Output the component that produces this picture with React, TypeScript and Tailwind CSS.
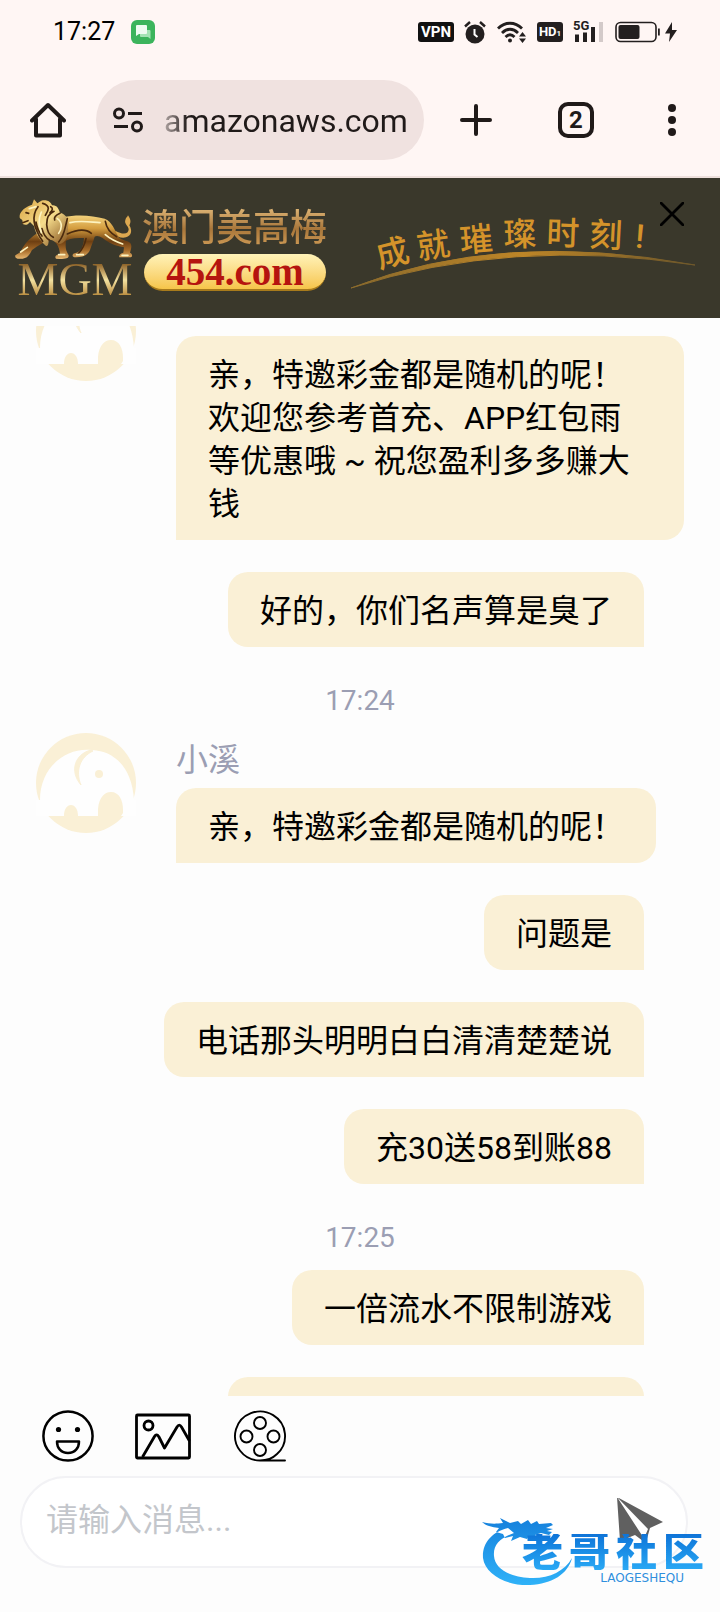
import { useState } from "react";
import type { ReactNode } from "react";

type Message =
  | { kind: "agent"; name?: string; text: string }
  | { kind: "user"; text: string }
  | { kind: "time"; text: string };

const messages: Message[] = [
  {
    kind: "agent",
    text: "亲，特邀彩金都是随机的呢！欢迎您参考首充、APP红包雨等优惠哦 ~ 祝您盈利多多赚大钱",
  },
  { kind: "user", text: "好的，你们名声算是臭了" },
  { kind: "time", text: "17:24" },
  { kind: "agent", name: "小溪", text: "亲，特邀彩金都是随机的呢！" },
  { kind: "user", text: "问题是" },
  { kind: "user", text: "电话那头明明白白清清楚楚说" },
  { kind: "user", text: "充30送58到账88" },
  { kind: "time", text: "17:25" },
  { kind: "user", text: "一倍流水不限制游戏" },
];

const slogan = [
  { char: "成", x: 392, y: 252, rotate: -14 },
  { char: "就", x: 433, y: 244, rotate: -8 },
  { char: "璀", x: 476, y: 238, rotate: -5 },
  { char: "璨", x: 520, y: 233, rotate: -2 },
  { char: "时", x: 563, y: 232, rotate: 2 },
  { char: "刻", x: 606, y: 234, rotate: 3 },
  { char: "!", x: 640, y: 235, rotate: 5 },
];

function StatusBar() {
  return (
    <div className="flex h-16 items-center justify-between pr-[41px] pl-[53px]">
      <div className="flex items-center gap-4">
        <span className="text-[25px] leading-8 text-black">17:27</span>
        <svg viewBox="0 0 24 24" className="size-6">
          <rect width="24" height="24" rx="6" fill="#3cb45c" />
          <path d="M9 10h9.500a1 1 0 0 1 1 1v8l-2.500-2H10a1 1 0 0 1-1-1z" fill="#a4e3b4" />
          <path d="M6 5h9a1 1 0 0 1 1 1v7a1 1 0 0 1-1 1H8l-3 2V6a1 1 0 0 1 1-1z" fill="#effbf1" />
        </svg>
      </div>
      <div className="flex items-center gap-[10px] text-[#231f1f]">
        <span className="flex h-5 w-9 items-center justify-center rounded-[3px] bg-[#111] text-[15px] font-bold text-white">
          VPN
        </span>
        <svg viewBox="0 0 22 24" className="h-6 w-[22px]" fill="currentColor">
          <circle cx="11" cy="14" r="9.500" />
          <path d="M1 6.500 6 2M21 6.500 16 2" stroke="currentColor" strokeWidth="2.400" />
          <path d="M10.500 9v5.500l3 2.500" stroke="#fff" strokeWidth="2" fill="none" />
        </svg>
        <svg viewBox="0 0 31 24" className="h-6 w-[31px]" fill="none" stroke="currentColor" strokeWidth="2.800">
          <path d="M2 8.500c7-7 17-7 24 0M6 13c5-5 11-5 16 0M9.500 17c3-3 6-3 9 0" />
          <circle cx="14" cy="20.500" r="2" fill="currentColor" stroke="none" />
          <path d="m26.500 12 3.500 4.500h-7zM26.500 23l3.500-4.500h-7z" fill="currentColor" stroke="none" />
        </svg>
        <span className="flex h-5 w-[26px] items-center justify-center rounded-[3px] bg-[#231f1f] text-[13px] font-bold text-white">
          HD<span className="mt-1 text-[8px]">1</span>
        </span>
        <svg viewBox="0 -4 32 32" className="size-8" fill="currentColor">
          <text x="0" y="10" fontSize="13" fontWeight="700">5G</text>
          <path d="M2 14.500h4V22H2zM10 12.500h4V22h-4zM18 7h4v15h-4z" />
          <path d="M26 2h4v20h-4z" opacity=".2" />
        </svg>
        <svg viewBox="0 0 64 24" className="h-6 w-16">
          <rect x="1" y="2.500" width="40" height="19" rx="4.500" fill="none" stroke="currentColor" strokeWidth="1.600" />
          <rect x="3.500" y="5" width="21" height="14" rx="2" fill="currentColor" />
          <path d="M43 8.500h1.800v7H43z" fill="currentColor" />
          <path d="M57 2 50 13.500h5L54 22l8-12h-5z" fill="currentColor" />
        </svg>
      </div>
    </div>
  );
}

function BarButton({ label, className = "", children }: { label: string; className?: string; children: ReactNode }) {
  return (
    <button type="button" aria-label={label} className={`flex size-12 shrink-0 items-center justify-center ${className}`}>
      {children}
    </button>
  );
}

function BrowserBar() {
  return (
    <div className="flex h-28 items-center px-6 text-[#201a19]">
      <BarButton label="Home">
        <svg viewBox="0 0 36 36" className="size-9" fill="none" stroke="currentColor" strokeWidth="4" strokeLinecap="round" strokeLinejoin="round">
          <path d="M2 18.500 18 3l16 15.500M6 17v16.500h24V17" />
        </svg>
      </BarButton>
      <div className="ml-6 flex h-20 min-w-0 flex-1 items-center rounded-full bg-[#f0e2e0] pr-4 pl-4">
        <svg viewBox="0 0 32 28" className="h-7 w-8 shrink-0" fill="none" stroke="currentColor" strokeWidth="3">
          <circle cx="7" cy="7.500" r="4.500" />
          <path d="M16 7.500h14M2 20.500h14" />
          <circle cx="25" cy="20.500" r="4.500" />
        </svg>
        <input
          aria-label="Address"
          readOnly
          value="amazonaws.com"
          className="ml-5 w-full min-w-0 bg-linear-to-r from-[#201a19]/30 to-[#201a19] to-[24px] bg-clip-text pt-[2px] text-[32px] leading-10 text-transparent outline-none"
        />
      </div>
      <BarButton label="New tab" className="ml-7">
        <svg viewBox="0 0 32 32" className="size-8" stroke="currentColor" strokeWidth="4" strokeLinecap="round">
          <path d="M16 2v28M2 16h28" />
        </svg>
      </BarButton>
      <BarButton label="Tabs" className="ml-[52px]">
        <span className="flex size-9 items-center justify-center rounded-[10px] border-4 border-current text-2xl font-bold">
          2
        </span>
      </BarButton>
      <BarButton label="More" className="ml-12">
        <svg viewBox="0 0 8 32" className="h-8 w-2" fill="currentColor">
          <circle cx="4" cy="4" r="4" />
          <circle cx="4" cy="16" r="4" />
          <circle cx="4" cy="28" r="4" />
        </svg>
      </BarButton>
    </div>
  );
}

function Lion() {
  return (
    <svg viewBox="0 0 390 216" className="h-[72px] w-[130px]">
      <defs>
        <linearGradient id="fur" x1="0" y1="0" x2="0" y2="1">
          <stop offset="0" stopColor="#f3d27c" />
          <stop offset=".3" stopColor="#d39c3e" />
          <stop offset=".6" stopColor="#6e3f12" />
          <stop offset=".8" stopColor="#a56a28" />
          <stop offset="1" stopColor="#e8b870" />
        </linearGradient>
        <linearGradient id="mane" x1="0" y1="0" x2="1" y2="1">
          <stop offset="0" stopColor="#d9a544" />
          <stop offset=".5" stopColor="#f6dc8c" />
          <stop offset="1" stopColor="#7d4a16" />
        </linearGradient>
      </defs>
      <path
        d="M316 116c20 12 40 12 40-4 0-10-14-16-10-28 2-8 6-8 8-14 8 12 10 20 4 30 10 16 6 32-10 36-14 3-26-2-34-8z"
        fill="#dca850"
      />
      <path
        d="M158 76c50-10 90-4 126 4 22 8 30 34 42 56 10 10 26 10 34 16 8 8 2 22 0 30 8 4 8 12 2 14h-34c-2-8 4-12 12-14l2-16c-24-4-44-12-64-28-10-6-18-8-24-4-4 14-10 26-14 40-6 14-20 22-42 22-14 0-12-10-4-12 22-6 26-22 28-46-20 0-38 0-54 8-2 18-2 28 8 44 0 10-6 12-38 10-6-8 2-12 12-14-2-24-12-34-24-44-20 8-40 16-60 32-8 16-14 24-28 26-20 2-24-4-22-10l16-10c10-24 26-40 46-54z"
        fill="url(#fur)"
      />
      <path
        d="M30 66c8-16 20-22 36-28l6-16 10 12 12-8c18-4 28 4 32 14 14-2 20 10 24 22 20 4 28 24 24 44 2 28-6 46-24 50-16-4-24-16-34-12 0 10-2 20-8 18-18-16-30-34-36-60l-12-12c-8 10-14 10-22 6 0-8 0-12-4-14-6-2-6-8-4-16z"
        fill="url(#mane)"
      />
      <g fill="none" stroke="#4a2a0e" strokeWidth="5" strokeLinecap="round">
        <path d="M84 44c-18 24-16 60 14 104M98 34c28 8 14 26 8 36M132 58c-22 12-20 20-22 40 2 20 6 30 20 38M78 90c4 24 12 34 18 42M38 92l16-6M48 62l8 2M172 80c-8 30-8 50-26 70M244 124c-20-16-46-10-72 2M286 88c4 24 16 36 34 46M228 140c-4 20-14 36-24 46M96 110c4 16 12 28 22 34M122 44c8 4 6 12-2 18M150 64c-14 6-18 14-16 20" />
      </g>
      <g fill="none" stroke="#fdf3c0" strokeWidth="5" strokeLinecap="round">
        <path d="M94 60c-10 22-8 42 0 62M142 80c18 12 12 34 4 44M180 92c30-8 60-2 90 0M286 128c16 14 34 22 52 28M58 50l20-6M32 180l20-14M146 188h18M200 188h20M336 190h18" />
      </g>
    </svg>
  );
}

function Banner() {
  return (
    <section className="relative flex h-[140px] shrink-0 overflow-hidden bg-[#3a382b] pl-[10px]">
      <div className="flex w-[130px] shrink-0 flex-col items-center pt-[14px]">
        <Lion />
        <span className="bg-linear-to-b from-[#8f6428] via-[#f3e2a0] to-[#b98b3c] bg-clip-text font-['Liberation_Serif',serif] text-[46px] leading-8 text-transparent">
          MGM
        </span>
      </div>
      <div className="ml-[2px] flex w-[184px] shrink-0 flex-col pt-[29px]">
        <h1 className="bg-linear-to-b from-[#e0b878] via-[#a8763a] to-[#d8a45c] bg-clip-text text-[37px] leading-[44px] font-medium whitespace-nowrap text-transparent">
          澳门美高梅
        </h1>
        <a
          href="#"
          className="mt-[3px] ml-[2px] flex h-[37px] items-center justify-center rounded-full border-b-2 border-[#a87b1c] bg-linear-to-b from-[#fff3b8] to-[#f6c548] font-['Liberation_Serif',serif] text-[39px] leading-9 font-bold text-[#b5140f]"
        >
          454.com
        </a>
      </div>
      <svg viewBox="340 178 380 140" className="ml-[14px] h-[140px] w-[380px] shrink-0">
        <defs>
          <linearGradient id="arc">
            <stop offset="0" stopColor="#8a6a2c" />
            <stop offset=".5" stopColor="#bd8527" />
            <stop offset="1" stopColor="#6d572a" />
          </linearGradient>
        </defs>
        <path d="M351 288Q500 229 695 265Q510 237 351 288z" fill="url(#arc)" stroke="url(#arc)" />
        <g fill="#d4932a" fontSize="33" fontWeight="500" textAnchor="middle">
          {slogan.map((s) => (
            <text key={s.char} x={s.x} y={s.y + 13} transform={`rotate(${s.rotate} ${s.x} ${s.y})`}>
              {s.char}
            </text>
          ))}
        </g>
      </svg>
      <button type="button" aria-label="关闭" className="absolute top-6 right-9">
        <svg viewBox="0 0 24 24" className="size-6" stroke="#000" strokeWidth="2.800" strokeLinecap="round">
          <path d="m1 1 22 22M23 1 1 23" />
        </svg>
      </button>
    </section>
  );
}

function Avatar() {
  return (
    <svg viewBox="0 0 100 100" className="size-[100px] shrink-0">
      <circle cx="50" cy="50" r="50" fill="#faf0d6" />
      <path
        d="M0 67V83H28C28 76 31 72 35 72S42 76 42 83H62V76C63 65 68 59 75 59C83 59 87 67 87 77V80L85 83H100V67H98C96 34 78 18 56 17C30 14 4 34 4 67z"
        fill="#fefefe"
      />
      <path d="M55 17c-16 4-22 21-10 35-6-14-1-28 12-34z" fill="#faf0d6" stroke="#faf0d6" />
      <circle cx="63" cy="41" r="4" fill="#faf0d6" />
    </svg>
  );
}

function ChatRow({ message }: { message: Message }) {
  if (message.kind === "time") {
    return <div className="mb-[11px] text-center text-[28px] leading-[43px] text-[#9b9eb3]">{message.text}</div>;
  }
  if (message.kind === "user") {
    return (
      <div className="mr-[76px] mb-8 ml-9 flex justify-end">
        <p className="rounded-[20px] rounded-br-none bg-[#faf0d6] px-8 pt-[18px] pb-[14px] text-[32px] leading-[43px]">
          {message.text}
        </p>
      </div>
    );
  }
  return (
    <div className="mb-8 flex items-start gap-10 pr-9 pl-9">
      <Avatar />
      <div className="flex min-w-0 flex-col items-start">
        <span className="h-[55px] text-[32px] leading-[55px] text-[#9b9eb3]">{message.name}</span>
        <p className="rounded-[20px] rounded-bl-none bg-[#faf0d6] px-8 pt-[18px] pb-[14px] text-[32px] leading-[43px]">
          {message.text}
        </p>
      </div>
    </div>
  );
}

function Composer() {
  const [draft, setDraft] = useState("");

  return (
    <footer className="relative shrink-0 pt-[14px] pb-11">
      <div className="flex items-center gap-10 pl-[42px]">
        <button type="button" aria-label="表情">
          <svg viewBox="0 0 52 52" className="size-[52px]" fill="none" stroke="#000" strokeWidth="2.500">
            <circle cx="26" cy="26" r="24.600" />
            <circle cx="16.500" cy="19.500" r="2.600" fill="#000" stroke="none" />
            <circle cx="35.500" cy="19.500" r="2.600" fill="#000" stroke="none" />
            <path d="M15 31.500h22C37 38 33 43 26 43s-11-5-11-11.500z" strokeLinejoin="round" />
          </svg>
        </button>
        <button type="button" aria-label="图片">
          <svg viewBox="0 0 58 52" className="h-[52px] w-[58px]" fill="none" stroke="#000" strokeWidth="2.800" strokeLinejoin="round">
            <rect x="2.500" y="5" width="53" height="43" rx="1" />
            <circle cx="14.500" cy="15.500" r="4.500" />
            <path d="m8.500 47 12-20.500c1.500-2.500 3-2 4.500.5l5.500 11L43 17c1.500-2.500 3-2.500 4.500 0l8 14" />
          </svg>
        </button>
        <button type="button" aria-label="视频">
          <svg viewBox="-2 0 56 52" className="h-[52px] w-14" fill="none" stroke="#000" strokeWidth="1.900">
            <path d="M26 50.500h25M26 50.500A25 24.500 0 1 1 43 44C38 49 33 50.500 26 50.500" strokeLinecap="round" />
            <circle cx="26" cy="13" r="6" />
            <circle cx="12.500" cy="26.500" r="6" />
            <circle cx="39.500" cy="26.500" r="6" />
            <circle cx="26" cy="40" r="6" />
          </svg>
        </button>
      </div>
      <form
        onSubmit={(e) => e.preventDefault()}
        className="mt-[14px] mr-8 ml-5 flex h-[92px] items-center rounded-full border-2 border-[#f2f2f5] bg-white pr-[22px] pl-6"
      >
        <input
          type="text"
          aria-label="消息"
          value={draft}
          onChange={(e) => setDraft(e.target.value)}
          placeholder="请输入消息..."
          className="min-w-0 flex-1 bg-transparent pb-1 text-[32px] leading-[43px] outline-none placeholder:text-[#c3c6cb]"
        />
        <button type="submit" aria-label="发送">
          <svg viewBox="0 2 48 48" className="size-12" fill="#606060">
            <path d="M1 1 4 45l15-6 8 6 2-1zM1 1l46 25-13 6-4 14-3-1 5-12z" />
          </svg>
        </button>
      </form>
      <Watermark />
    </footer>
  );
}

function Watermark() {
  return (
    <div className="pointer-events-none absolute right-4 bottom-6 flex h-[72px] w-[222px] justify-end">
      <svg viewBox="0 0 100 72" className="absolute top-0 left-0 h-[72px] w-[100px]">
        <defs>
          <linearGradient id="dragon" x1="0" y1="0" x2="0" y2="1">
            <stop offset="0" stopColor="#1580dc" />
            <stop offset="1" stopColor="#2fb2f8" />
          </linearGradient>
        </defs>
        <path
          d="M26 12C10 16 0 27 1 42C3 58 24 70 48 69C70 68 86 58 90 42C82 56 66 63 48 62C28 61 13 53 12 40C11 29 18 22 32 17zM0 6c8 2 13 2 21 1l-3-5 10 5 8-2 3 3 7-4 3 4 6-3 2 3 12-1 2 2-7 3 7 1-6 2 5 1-3 3-8-2-6 2 3 3-9-2-2 3-7-2-9 4 2-5-8 2-2-4-7-2 3-4C12 11 5 11 0 6z"
          fill="url(#dragon)"
        />
      </svg>
      <div className="relative flex w-[182px] flex-col items-end">
        <div className="mt-[18px] flex w-full justify-between bg-linear-to-b from-[#0f74d8] to-[#2aa9f5] bg-clip-text text-[41px] leading-9 font-black text-transparent">
          <span>老</span>
          <span>哥</span>
          <span>社</span>
          <span>区</span>
        </div>
        <span className="pr-5 font-['DejaVu_Sans',sans-serif] text-[12px] leading-4 text-[#2f8fdd]">LAOGESHEQU</span>
      </div>
    </div>
  );
}

export default function App() {
  return (
    <div className="flex h-screen flex-col bg-[#fdfdfd] font-[Roboto,'Noto_Sans_CJK_SC',sans-serif] text-black">
      <header className="shrink-0 border-b-2 border-[#eee0dc] bg-[#fff6f4]">
        <StatusBar />
        <BrowserBar />
      </header>
      <Banner />
      <main className="mt-2 min-h-0 flex-1 overflow-hidden">
        <div className="-mt-[45px]">
          {messages.map((m, i) => (
            <ChatRow key={i} message={m} />
          ))}
          <div className="mr-[76px] ml-auto h-[75px] w-[416px] rounded-[20px] rounded-br-none bg-[#faf0d6]" />
        </div>
      </main>
      <Composer />
    </div>
  );
}
